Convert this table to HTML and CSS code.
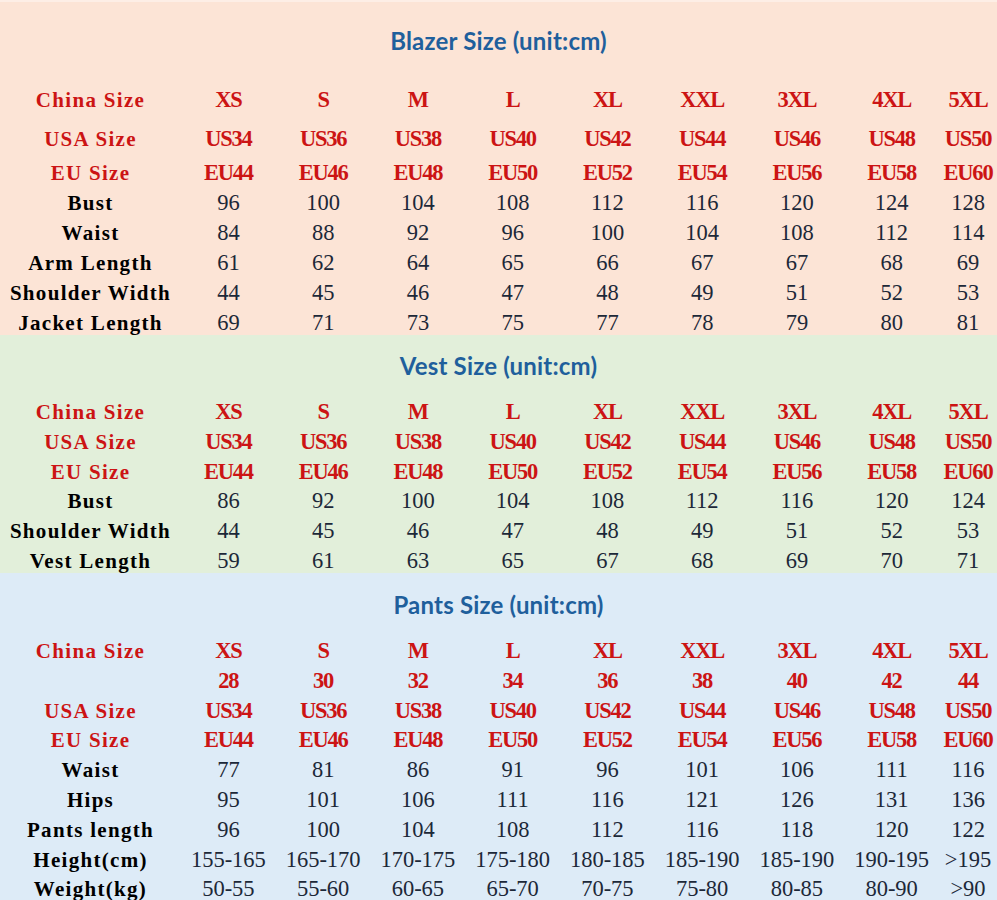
FILE: index.html
```html
<!DOCTYPE html>
<html>
<head>
<meta charset="utf-8">
<link rel="stylesheet" href="styles.css">
</head>
<body>
<div class="page">
  <section class="sec sec-blazer">
    <h2 class="title">Blazer Size (unit:cm)</h2>
    <div class="grid">
      <div class="row r-china red"><span class="lab">China Size</span><span>XS</span><span>S</span><span>M</span><span>L</span><span>XL</span><span>XXL</span><span>3XL</span><span>4XL</span><span>5XL</span></div>
      <div class="row r-usa red"><span class="lab">USA Size</span><span>US34</span><span>US36</span><span>US38</span><span>US40</span><span>US42</span><span>US44</span><span>US46</span><span>US48</span><span>US50</span></div>
      <div class="row r-eu red"><span class="lab">EU Size</span><span>EU44</span><span>EU46</span><span>EU48</span><span>EU50</span><span>EU52</span><span>EU54</span><span>EU56</span><span>EU58</span><span>EU60</span></div>
      <div class="row num"><span class="lab">Bust</span><span>96</span><span>100</span><span>104</span><span>108</span><span>112</span><span>116</span><span>120</span><span>124</span><span>128</span></div>
      <div class="row num"><span class="lab">Waist</span><span>84</span><span>88</span><span>92</span><span>96</span><span>100</span><span>104</span><span>108</span><span>112</span><span>114</span></div>
      <div class="row num"><span class="lab">Arm Length</span><span>61</span><span>62</span><span>64</span><span>65</span><span>66</span><span>67</span><span>67</span><span>68</span><span>69</span></div>
      <div class="row num"><span class="lab">Shoulder Width</span><span>44</span><span>45</span><span>46</span><span>47</span><span>48</span><span>49</span><span>51</span><span>52</span><span>53</span></div>
      <div class="row num"><span class="lab">Jacket Length</span><span>69</span><span>71</span><span>73</span><span>75</span><span>77</span><span>78</span><span>79</span><span>80</span><span>81</span></div>
    </div>
  </section>
  <section class="sec sec-vest">
    <h2 class="title">Vest Size (unit:cm)</h2>
    <div class="grid">
      <div class="row r-first red"><span class="lab">China Size</span><span>XS</span><span>S</span><span>M</span><span>L</span><span>XL</span><span>XXL</span><span>3XL</span><span>4XL</span><span>5XL</span></div>
      <div class="row red"><span class="lab">USA Size</span><span>US34</span><span>US36</span><span>US38</span><span>US40</span><span>US42</span><span>US44</span><span>US46</span><span>US48</span><span>US50</span></div>
      <div class="row red"><span class="lab">EU Size</span><span>EU44</span><span>EU46</span><span>EU48</span><span>EU50</span><span>EU52</span><span>EU54</span><span>EU56</span><span>EU58</span><span>EU60</span></div>
      <div class="row num"><span class="lab">Bust</span><span>86</span><span>92</span><span>100</span><span>104</span><span>108</span><span>112</span><span>116</span><span>120</span><span>124</span></div>
      <div class="row num"><span class="lab">Shoulder Width</span><span>44</span><span>45</span><span>46</span><span>47</span><span>48</span><span>49</span><span>51</span><span>52</span><span>53</span></div>
      <div class="row num"><span class="lab">Vest Length</span><span>59</span><span>61</span><span>63</span><span>65</span><span>67</span><span>68</span><span>69</span><span>70</span><span>71</span></div>
    </div>
  </section>
  <section class="sec sec-pants">
    <h2 class="title">Pants Size (unit:cm)</h2>
    <div class="grid">
      <div class="row r-first red"><span class="lab">China Size</span><span>XS</span><span>S</span><span>M</span><span>L</span><span>XL</span><span>XXL</span><span>3XL</span><span>4XL</span><span>5XL</span></div>
      <div class="row red"><span class="lab"></span><span>28</span><span>30</span><span>32</span><span>34</span><span>36</span><span>38</span><span>40</span><span>42</span><span>44</span></div>
      <div class="row red"><span class="lab">USA Size</span><span>US34</span><span>US36</span><span>US38</span><span>US40</span><span>US42</span><span>US44</span><span>US46</span><span>US48</span><span>US50</span></div>
      <div class="row red"><span class="lab">EU Size</span><span>EU44</span><span>EU46</span><span>EU48</span><span>EU50</span><span>EU52</span><span>EU54</span><span>EU56</span><span>EU58</span><span>EU60</span></div>
      <div class="row num"><span class="lab">Waist</span><span>77</span><span>81</span><span>86</span><span>91</span><span>96</span><span>101</span><span>106</span><span>111</span><span>116</span></div>
      <div class="row num"><span class="lab">Hips</span><span>95</span><span>101</span><span>106</span><span>111</span><span>116</span><span>121</span><span>126</span><span>131</span><span>136</span></div>
      <div class="row num"><span class="lab">Pants length</span><span>96</span><span>100</span><span>104</span><span>108</span><span>112</span><span>116</span><span>118</span><span>120</span><span>122</span></div>
      <div class="row num"><span class="lab">Height(cm)</span><span>155-165</span><span>165-170</span><span>170-175</span><span>175-180</span><span>180-185</span><span>185-190</span><span>185-190</span><span>190-195</span><span>&gt;195</span></div>
      <div class="row num"><span class="lab">Weight(kg)</span><span>50-55</span><span>55-60</span><span>60-65</span><span>65-70</span><span>70-75</span><span>75-80</span><span>80-85</span><span>80-90</span><span>&gt;90</span></div>
    </div>
  </section>
</div>
</body>
</html>
```

FILE: styles.css
```css
html, body {
  margin: 0;
  padding: 0;
  background: #ddebf7;
}

.page {
  width: 997px;
  overflow: hidden;
}

.sec {
  display: flex;
  flex-direction: column;
  overflow: visible;
}

.sec-blazer {
  background: #fce4d6;
  height: 335px;
  border-top: 2px solid #fdeee6;
  padding-top: 24px;
  box-sizing: border-box;
}

.sec-vest {
  background: #e2efda;
  height: 238px;
  padding-top: 16px;
  box-sizing: border-box;
}

.sec-pants {
  background: #ddebf7;
  height: 327px;
  padding-top: 17px;
  box-sizing: border-box;
}

.title {
  margin: 0;
  height: 30px;
  line-height: 30px;
  text-align: center;
  font-family: Lato, "Open Sans", sans-serif;
  font-weight: 700;
  font-size: 24px;
  color: #1f5f9c;
  letter-spacing: 0.2px;
}

.grid {
  display: flex;
  flex-direction: column;
}

.row {
  display: grid;
  grid-template-columns: 181px repeat(8, 94.75px) 1fr;
  height: 29.8px;
  align-items: center;
  text-align: center;
  white-space: nowrap;
}

.sec-blazer .row { height: 30px; }

.sec-blazer .r-china { margin-top: 29px; }
.sec-blazer .r-usa { margin-top: 9px; }
.sec-blazer .r-eu { margin-top: 4px; }

.sec-vest .r-first,
.sec-pants .r-first { margin-top: 16px; }

.row span {
  font-family: "Liberation Serif", "Times New Roman", serif;
  font-size: 22.5px;
  line-height: 30px;
}

.row .lab {
  font-family: "Liberation Serif", "Times New Roman", serif;
  font-weight: 700;
  font-size: 21px;
  letter-spacing: 1.3px;
}

.red span {
  color: #cc1414;
  font-weight: 700;
  letter-spacing: -1.2px;
}

.red .lab {
  letter-spacing: 1.3px;
}

.num span {
  color: #1c2838;
  font-weight: 400;
}

.num .lab {
  color: #000;
  font-weight: 700;
}

.num span:not(.lab) {
  letter-spacing: 0px;
}
```
